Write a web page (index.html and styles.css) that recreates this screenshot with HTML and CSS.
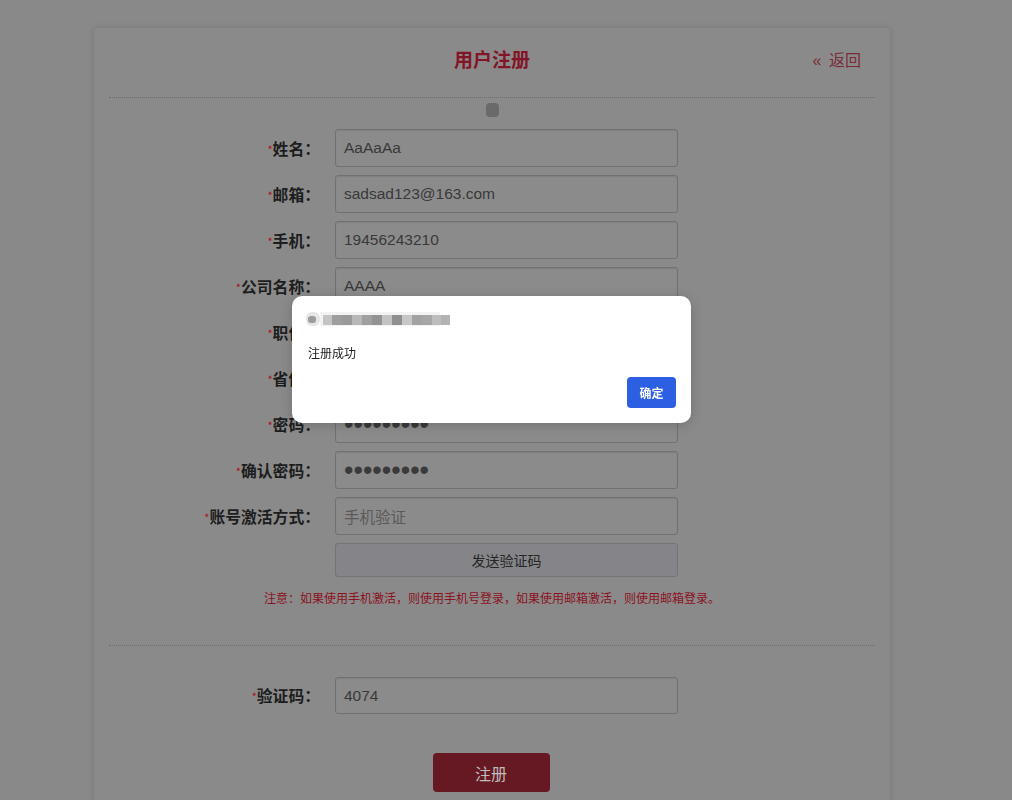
FILE: index.html
```html
<!DOCTYPE html>
<html lang="zh-CN">
<head>
<meta charset="utf-8">
<title>用户注册</title>
<link rel="stylesheet" href="styles.css">
</head>
<body>
<div class="wrap">
  <div class="card">
    <div class="card-head">
      <h1 class="title">用户注册</h1>
      <a class="back" href="#"><span class="raquo">«</span> 返回</a>
    </div>
    <div class="loader"><span class="dot"></span></div>
    <form class="form">
      <div class="row"><label class="lbl"><i class="star">*</i>姓名：</label><input class="ipt" type="text" value="AaAaAa"></div>
      <div class="row"><label class="lbl"><i class="star">*</i>邮箱：</label><input class="ipt" type="text" value="sadsad123@163.com"></div>
      <div class="row"><label class="lbl"><i class="star">*</i>手机：</label><input class="ipt" type="text" value="19456243210"></div>
      <div class="row"><label class="lbl"><i class="star">*</i>公司名称：</label><input class="ipt" type="text" value="AAAA"></div>
      <div class="row"><label class="lbl"><i class="star">*</i>职位：</label><input class="ipt" type="text" value=""></div>
      <div class="row"><label class="lbl"><i class="star">*</i>省份：</label><input class="ipt" type="text" value=""></div>
      <div class="row"><label class="lbl"><i class="star">*</i>密码：</label><input class="ipt pwd" type="password" value="123456789"></div>
      <div class="row"><label class="lbl"><i class="star">*</i>确认密码：</label><input class="ipt pwd" type="password" value="123456789"></div>
      <div class="row"><label class="lbl"><i class="star">*</i>账号激活方式：</label><div class="ipt select">手机验证</div></div>
      <div class="row row-btn"><span class="lbl"></span><button type="button" class="send">发送验证码</button></div>
      <p class="notice">注意：如果使用手机激活，则使用手机号登录，如果使用邮箱激活，则使用邮箱登录。</p>
      <div class="divider"></div>
      <div class="row row-code"><label class="lbl"><i class="star">*</i>验证码：</label><input class="ipt code" type="text" value="4074"></div>
      <div class="submit-wrap"><button type="button" class="submit">注册</button></div>
    </form>
  </div>
</div>

<div class="dialog">
  <div class="dlg-title">
    <svg width="146" height="18" viewBox="0 0 146 18">
      <rect x="0" y="2" width="14" height="14" rx="6" fill="#e6e6e6"/>
      <rect x="2" y="6" width="8" height="7" rx="3" fill="#9c9c9c"/>
      <rect x="14" y="2" width="120" height="14" fill="#f3f3f3"/>
      <rect x="17" y="5" width="10" height="10" fill="#c4c4c4"/>
      <rect x="26" y="5" width="10" height="10" fill="#9e9e9e"/>
      <rect x="36" y="5" width="10" height="10" fill="#9a9a9a"/>
      <rect x="46" y="5" width="10" height="10" fill="#b8b8b8"/>
      <rect x="56" y="5" width="10" height="10" fill="#a0a0a0"/>
      <rect x="66" y="5" width="10" height="10" fill="#939393"/>
      <rect x="76" y="5" width="10" height="10" fill="#c3c3c3"/>
      <rect x="86" y="5" width="10" height="10" fill="#8f8f8f"/>
      <rect x="96" y="5" width="10" height="10" fill="#c6c6c6"/>
      <rect x="106" y="5" width="10" height="10" fill="#a2a2a2"/>
      <rect x="116" y="5" width="10" height="10" fill="#a6a6a6"/>
      <rect x="126" y="5" width="9" height="10" fill="#bdbdbd"/>
      <rect x="135" y="5" width="9" height="10" fill="#b3b3b3"/>
    </svg>
  </div>
  <div class="dlg-msg">注册成功</div>
  <div class="dlg-foot"><button type="button" class="ok">确定</button></div>
</div>
</body>
</html>
```

FILE: styles.css
```css
html, body {
  margin: 0;
  padding: 0;
}
body {
  background: #898989;
  font-family: "Noto Sans CJK SC", "Liberation Sans", sans-serif;
  height: 800px;
  overflow: hidden;
}
.wrap {
  width: 984px;
  padding-top: 28px;
}
.card {
  width: 796px;
  margin: 0 auto;
  background: #8a8a8a;
  border-radius: 4px;
  box-shadow: 0 0 6px rgba(0, 0, 0, 0.14);
  padding: 0 15px 40px;
  box-sizing: border-box;
  min-height: 800px;
}
.card-head {
  position: relative;
  height: 69px;
  border-bottom: 1px dotted #6f6f6f;
  display: flex;
  align-items: center;
  justify-content: center;
}
.title {
  margin: 0;
  padding-bottom: 8px;
  font-size: 19px;
  font-weight: 700;
  color: #821426;
  letter-spacing: 0;
}
.back {
  position: absolute;
  right: 14px;
  top: 19px;
  color: #7a2b38;
  font-size: 16px;
  text-decoration: none;
}
.raquo {
  font-family: "Liberation Sans", sans-serif;
  margin-right: 4px;
}
.loader {
  height: 31px;
  display: flex;
  justify-content: center;
  padding-top: 5px;
  box-sizing: border-box;
}
.dot {
  width: 13px;
  height: 14px;
  border-radius: 4px;
  background: #6a6a6b;
}
.form {
  margin: 0;
}
.row {
  display: flex;
  align-items: center;
  height: 38px;
  margin-bottom: 8px;
}
.lbl {
  width: 211px;
  flex: none;
  text-align: right;
  font-size: 15.8px;
  font-weight: 700;
  color: #1d1d1d;
  margin-right: 15px;
  white-space: nowrap;
}
.star {
  font-style: normal;
  color: #a8121f;
  font-size: 11px;
  font-weight: 400;
  vertical-align: 1px;
}
.ipt {
  width: 343px;
  height: 38px;
  box-sizing: border-box;
  border: 1px solid #717171;
  border-radius: 3px;
  background: #8b8b8b;
  box-shadow: inset 0 1px 1px rgba(0, 0, 0, 0.08);
  padding: 0 8px;
  font-family: "Liberation Sans", "Noto Sans CJK SC", sans-serif;
  font-size: 15.5px;
  color: #393939;
  outline: none;
}
.pwd {
  font-size: 27px;
  letter-spacing: 0;
  color: #3a3a3a;
  padding-left: 8px;
}
.select {
  display: flex;
  align-items: center;
  color: #5a5a5a;
  font-family: "Noto Sans CJK SC", sans-serif;
  font-size: 15.5px;
}
.row-btn {
  height: 34px;
}
.send {
  width: 343px;
  height: 34px;
  border: 1px solid #747474;
  border-radius: 3px;
  background: #858589;
  font-family: "Noto Sans CJK SC", sans-serif;
  font-size: 14px;
  color: #262626;
  padding: 0;
}
.notice {
  margin: 6px 0 0;
  text-align: center;
  font-size: 12px;
  line-height: 26px;
  color: #8c1222;
}
.divider {
  margin-top: 34px;
  border-top: 1px dotted #707070;
  height: 0;
}
.row-code {
  margin-top: 31px;
  height: 37px;
}
.row-code .ipt {
  height: 37px;
}
.submit-wrap {
  display: flex;
  justify-content: center;
  margin-top: 39px;
  padding-right: 2px;
}
.submit {
  width: 117px;
  height: 39px;
  border: none;
  border-radius: 4px;
  background: #661823;
  color: #bdbdbd;
  font-family: "Noto Sans CJK SC", sans-serif;
  font-size: 16px;
  padding: 0;
}
.dialog {
  position: fixed;
  left: 292px;
  top: 296px;
  width: 399px;
  height: 127px;
  box-sizing: border-box;
  background: #fff;
  border-radius: 10px;
  box-shadow: 0 2px 12px rgba(0, 0, 0, 0.18);
  padding: 14px 15px 15px 16px;
  display: flex;
  flex-direction: column;
}
.dlg-title {
  height: 18px;
}
.dlg-title svg {
  display: block;
  margin-left: -2px;
}
.dlg-msg {
  margin-top: 16px;
  font-size: 12px;
  color: #202124;
  line-height: 18px;
}
.dlg-foot {
  margin-top: auto;
  display: flex;
  justify-content: flex-end;
}
.ok {
  width: 49px;
  height: 31px;
  border: none;
  border-radius: 4px;
  background: #2c5fe2;
  color: #fff;
  font-family: "Noto Sans CJK SC", sans-serif;
  font-size: 12px;
  font-weight: 700;
  padding: 0;
}
```
